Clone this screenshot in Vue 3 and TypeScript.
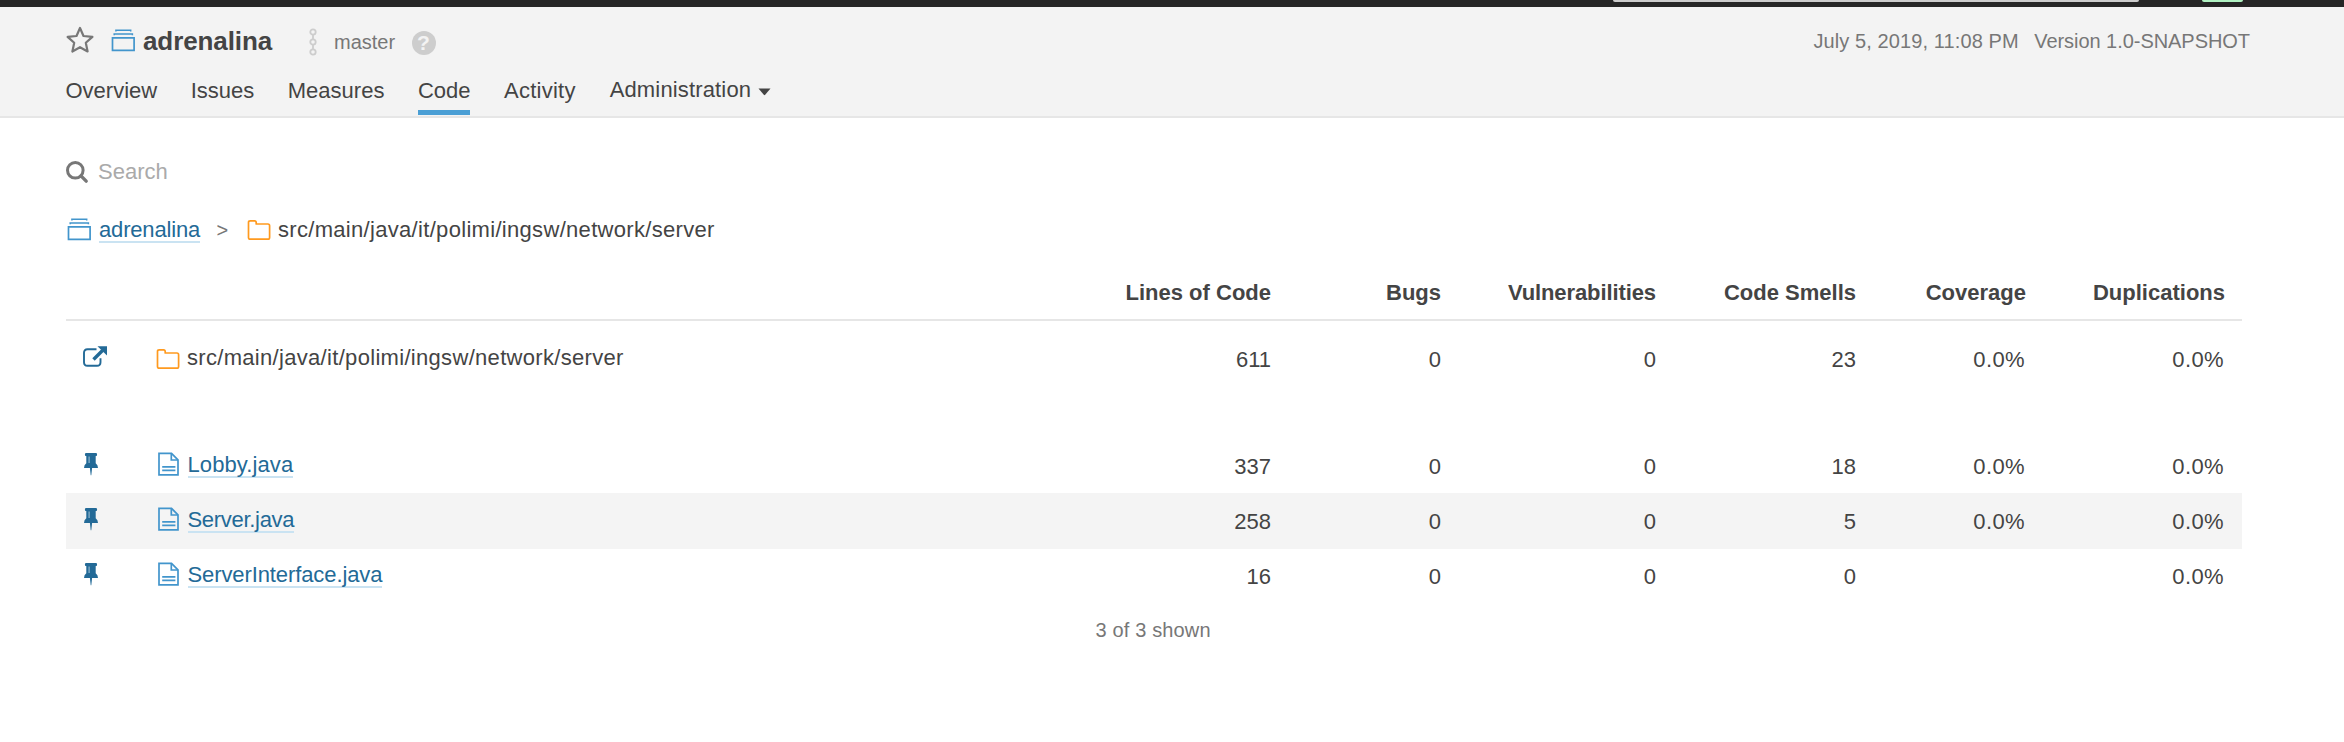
<script setup lang="ts">
import { h, type FunctionalComponent } from 'vue'

interface Row {
  name: string
  values: string[]
  tone: string
}

const tabs = [
  { label: 'Overview', cls: '' },
  { label: 'Issues', cls: '' },
  { label: 'Measures', cls: '' },
  { label: 'Code', cls: 'active' },
  { label: 'Activity', cls: 'loose' },
]
const columns = ['Lines of Code', 'Bugs', 'Vulnerabilities', 'Code Smells', 'Coverage', 'Duplications']
const path = 'src/main/java/it/polimi/ingsw/network/server'
const base: string[] = ['611', '0', '0', '23', '0.0%', '0.0%']
const files: Row[] = [
  { name: 'Lobby.java', values: ['337', '0', '0', '18', '0.0%', '0.0%'], tone: 'lobby' },
  { name: 'Server.java', values: ['258', '0', '0', '5', '0.0%', '0.0%'], tone: 'server' },
  { name: 'ServerInterface.java', values: ['16', '0', '0', '0', '', '0.0%'], tone: 'iface' },
]

const ProjectIcon: FunctionalComponent = () =>
  h('svg', { width: 27, height: 27, viewBox: '0 0 27 27', fill: 'none', stroke: '#4295cc' }, [
    h('path', { 'stroke-width': 1.7, d: 'M2.500 10.800h21.600v12.500H2.500z' }),
    h('path', { 'stroke-width': 1.5, d: 'M4.200 8.200V6.900h18.200v1.300M5.900 4.600V3.200h14.800v1.400' }),
  ])
const FolderIcon: FunctionalComponent = () =>
  h('svg', { width: 24, height: 22, viewBox: '0 0 24 22' }, [
    h('path', {
      fill: 'none',
      stroke: '#ff9a1f',
      'stroke-width': 1.7,
      'stroke-linejoin': 'round',
      d: 'M1.500 3.500q0-1.700 1.700-1.700h4.400q1.600 0 1.600 1.700v1.500h11.700q1.700 0 1.700 1.700v11.800q0 1.700-1.700 1.700H3.200q-1.700 0-1.700-1.700z',
    }),
  ])
</script>

<template>
  <div class="page">
    <div class="topbar">
      <span class="top-search"></span>
      <span class="top-add"></span>
    </div>
    <header class="header">
      <div class="title-row">
        <svg class="star" width="28" height="28" viewBox="0 0 28 28">
          <path d="M14 2l3.500 8 8.900.900-6.600 5.900 1.800 8.700L14 21.200l-7.600 4.300 1.800-8.700L1.600 10.900l8.900-.900z" fill="none" stroke="#777" stroke-width="2.200" stroke-linejoin="round" />
        </svg>
        <ProjectIcon class="project" />
        <h1>adrenalina</h1>
        <svg class="branch" width="10" height="28" viewBox="0 0 10 28" fill="none" stroke="#cdcdcd" stroke-width="1.800">
          <circle cx="5" cy="4" r="2.700" /><circle cx="5" cy="14" r="2.700" /><circle cx="5" cy="24" r="2.700" />
          <path d="M5 6.700v4.600M5 16.700v4.600" />
        </svg>
        <span class="master">master</span>
        <span class="help">?</span>
        <span class="date">July 5, 2019, 11:08 PM</span>
        <span class="version">Version 1.0-SNAPSHOT</span>
      </div>
      <nav>
        <a v-for="t in tabs" :key="t.label" :class="t.cls">{{ t.label }}</a>
        <a class="admin">Administration
          <svg width="13" height="8" viewBox="0 0 13 8"><path d="M.500.500h12L7.200 6.800q-.700.700-1.400 0z" fill="#444" /></svg>
        </a>
      </nav>
    </header>

    <main>
      <div class="search">
        <svg width="23" height="24" viewBox="0 0 23 24" fill="none" stroke="#777">
          <circle cx="9.300" cy="10.300" r="7.800" stroke-width="3" />
          <path d="M15 15.900l5.200 5.200" stroke-width="3.400" stroke-linecap="round" />
        </svg>
        <span>Search</span>
      </div>
      <div class="crumbs">
        <ProjectIcon />
        <a class="link crumb-link">adrenalina</a>
        <span class="sep">&gt;</span>
        <FolderIcon class="crumb-folder" />
        <span class="path">{{ path }}</span>
      </div>

      <div class="table">
        <div class="row head">
          <span class="name-head"></span>
          <b v-for="c in columns" :key="c">{{ c }}</b>
        </div>
        <div class="row base">
          <span class="action">
            <svg class="open" width="26" height="24" viewBox="0 0 26 24" fill="none" stroke="#236a97">
              <path d="M14.500 4.200H5.500Q2 4.200 2 7.700v9.500q0 3.500 3.500 3.500h9.500q3.500 0 3.500-3.500v-4" stroke-width="1.900" />
              <path d="M11.500 14.500l9-9" stroke-width="3.400" />
              <path d="M15.500 1.200H25v9.300z" fill="#236a97" stroke="none" />
            </svg>
          </span>
          <span class="name"><FolderIcon class="row-folder" /><span class="path">{{ path }}</span></span>
          <span v-for="(v, i) in base" :key="i" class="num" :class="{ pct: i > 3 }">{{ v }}</span>
        </div>
        <div v-for="r in files" :key="r.name" class="row file">
          <span class="action">
            <svg class="pin" width="16" height="25" viewBox="0 0 16 25" fill="#236a97">
              <path d="M2.800.900h10.400q.900 0 .900 1.500t-.900 1.500h-.500v7.300q2.300 1.600 2.300 4.700H9.100L8.300 23.200h-.600L6.900 15.900H1q0-3.100 2.300-4.700V3.900h-.500q-.900 0-.9-1.500t.9-1.500z" />
              <path d="M5.500 4.500h1.200v6.500H5.500z" fill="#8fb6ce" />
            </svg>
          </span>
          <span class="name">
            <svg class="file-icon" width="22" height="25" viewBox="0 0 22 25" fill="none" stroke="#4295cc" stroke-width="1.700">
              <path d="M1 1.300h12.500l6.500 6.500v15H1z" />
              <path d="M13.300 1.300v6.700H20M4.200 14.800h13.200M4.200 18.300h13.200" />
            </svg>
            <a class="link" :class="r.tone">{{ r.name }}</a>
          </span>
          <span v-for="(v, i) in r.values" :key="i" class="num" :class="{ pct: i > 3 }">{{ v }}</span>
        </div>
      </div>
      <div class="shown">3 of 3 shown</div>
    </main>
  </div>
</template>

<style>
body { margin: 0; background: #fff; }
</style>

<style scoped>
.page {
  width: 2344px;
  height: 742px;
  overflow: hidden;
  background: #fff;
  color: #444;
  font: 22px/28px "Liberation Sans", Arial, sans-serif;
}
svg { display: block; flex: none; }
.topbar { display: flex; height: 7px; background: #262626; padding-left: 1613px; }
.top-search { width: 526px; height: 2px; background: #ccc; border-radius: 0 0 3px 3px; }
.top-add { width: 41px; height: 2px; margin-left: 63px; background: #b0f2c2; border-radius: 0 0 3px 3px; }
.header { height: 109px; background: #f3f3f3; border-bottom: 2px solid #e6e6e6; }
.title-row { display: flex; height: 68px; padding: 0 94px 0 66px; box-sizing: border-box; align-items: flex-start; }
.star { margin-top: 19px; }
.project { margin: 20px 0 0 15.500px; }
h1 { margin: 20px 0 0 6.500px; width: 130px; font-size: 26px; line-height: 28px; letter-spacing: -.1px; }
.branch { margin: 21px 0 0 35px; }
.master { margin: 21px 0 0 16px; font-size: 20px; color: #777; width: 62px; }
.help { margin: 24px 0 0 15.500px; width: 24px; height: 24px; border-radius: 50%; background: #cdcdcd; color: #f3f3f3; font-weight: bold; font-size: 21px; line-height: 24px; text-align: center; }
.date, .version { margin-top: 20px; font-size: 20px; color: #777; }
.date { margin-left: auto; letter-spacing: .1px; }
.version { margin-left: 15.500px; letter-spacing: -.05px; }
nav { display: flex; gap: 33.500px; padding-left: 65.500px; }
nav a { height: 35px; line-height: 32px; }
nav .active { border-bottom: 5px solid #4b9fd5; }
.loose { letter-spacing: .25px; }
.admin { display: flex; gap: 7px; margin-left: .5px; line-height: 30px; letter-spacing: .15px; }
nav .admin { line-height: 30px; }
.admin svg { margin-top: 13px; }
main { padding: 0 102px 0 66px; }
.search { display: flex; height: 28px; margin-top: 40px; align-items: center; gap: 9px; color: #aaa; }
.search span { line-height: 30px; }
.crumbs { display: flex; height: 30px; margin-top: 29px; }
.crumbs > svg:first-child { margin: 1px 0 0; }
.link { display: block; height: 26px; line-height: 30px; color: #236a97; border-bottom: 2px solid #cae3f2; }
.crumb-link { margin-left: 6px; letter-spacing: -.17px; width: 101px; }
.sep { margin-left: 16.500px; width: 13px; font-size: 20px; line-height: 31px; color: #777; }
.crumb-folder { margin: 4px 0 0 17.500px; }
.path { margin-left: 7px; letter-spacing: .31px; line-height: 30px; white-space: nowrap; }
.table { margin-top: 20px; }
.row { display: grid; grid-template-columns: 90px 1fr 170px 170px 215px 200px 170px 199px; padding-right: 17px; }
.head { height: 54px; border-bottom: 2px solid #e6e6e6; }
.head b { text-align: right; line-height: 55px; white-space: nowrap; }
.head b:nth-of-type(3) { letter-spacing: -.1px; }
.name-head { grid-column: span 2; }
.name { display: flex; }
.num { text-align: right; }
.num.pct { padding-right: 1px; letter-spacing: .4px; }
.base { height: 117px; }
.base .num { padding-top: 25px; }
.base .name { padding-top: 22px; }
.open { margin: 24px 0 0 16px; }
.row-folder { margin-top: 5px; }
.file { height: 55px; }
.file:nth-child(4) { background: #f4f4f4; height: 56px; margin-bottom: -1px; }
.file .num { padding-top: 15px; }
.file .name { padding-top: 12px; }
.pin { margin: 14px 0 0 17px; }
.file-icon { margin: 2px 0 0 1.500px; }
.file .link { margin-left: 8px; }
.lobby { letter-spacing: .1px; }
.server { letter-spacing: -.3px; }
.iface { letter-spacing: -.1px; }
.shown { margin: 13px 0 0; padding-left: 1029.500px; font-size: 20px; line-height: 28px; color: #777; letter-spacing: .15px; }
</style>
